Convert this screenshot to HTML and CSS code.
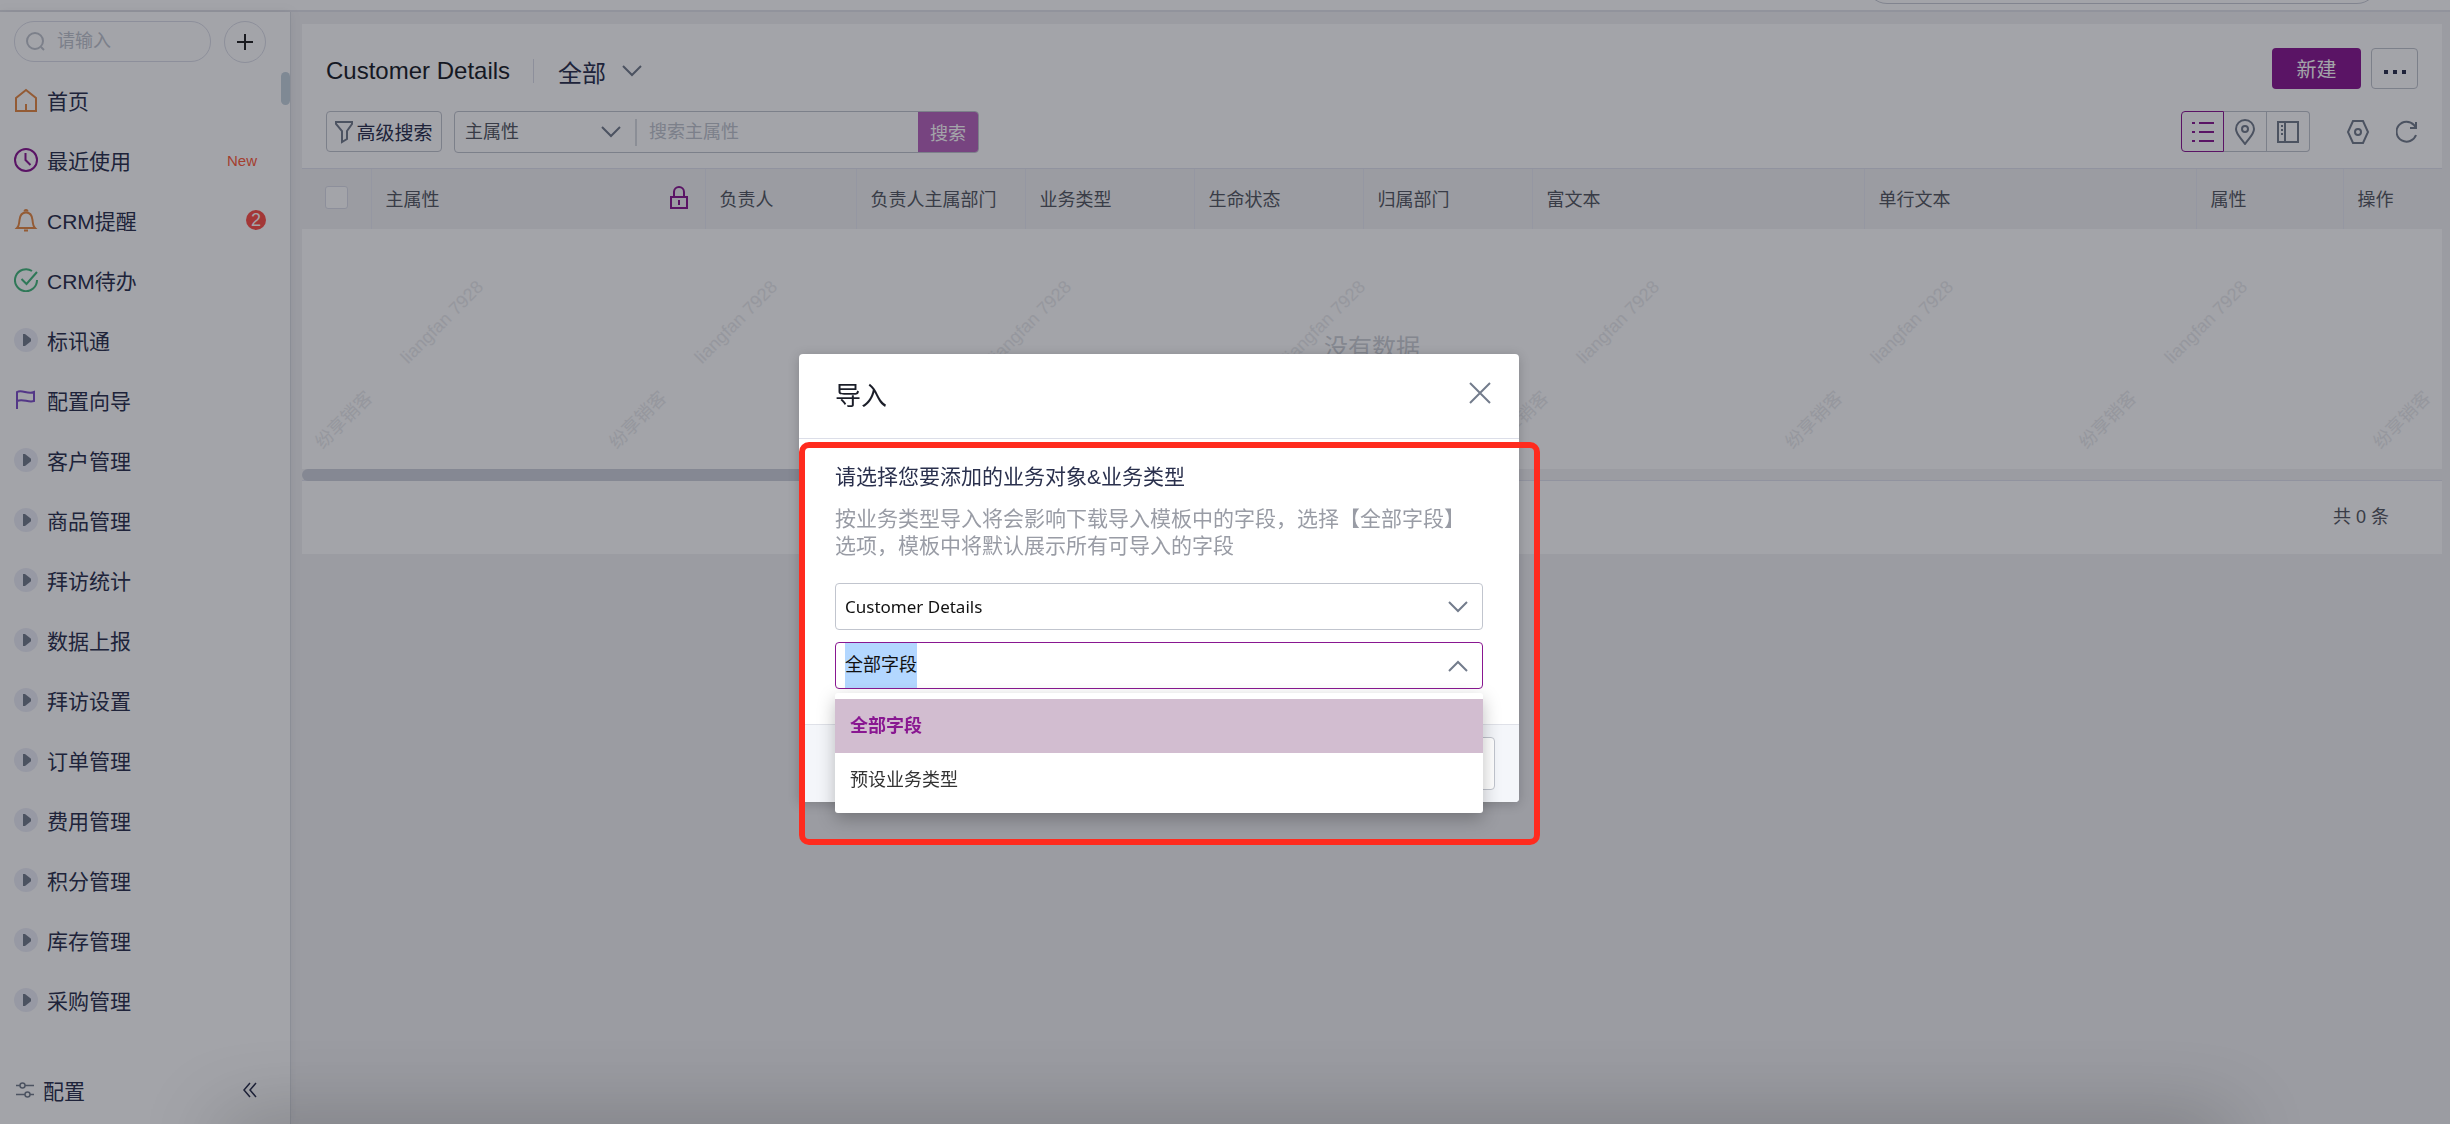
FILE: index.html
```html
<!DOCTYPE html>
<html lang="zh-CN">
<head>
<meta charset="UTF-8">
<meta name="viewport" content="width=device-width, initial-scale=1.0">
<title>Customer Details</title>
<link rel="stylesheet" href="styles.css">
</head>
<body>
<header class="topbar">
    <div class="topbar-search"></div>
</header>
<div class="layout">
    <aside class="sidebar">
        <div class="side-tools">
            <label class="side-search">
                <svg width="20" height="20" viewBox="0 0 20 20"><circle cx="9" cy="9" r="8"/><path d="M15 15l3 3"/></svg>
                <input type="text" placeholder="请输入" aria-label="搜索菜单">
            </label>
            <button type="button" class="add-btn" aria-label="添加">
                <svg width="18" height="18" viewBox="0 0 18 18"><path d="M9 1v16M1 9h16"/></svg>
            </button>
        </div>
        <nav class="menu">
            <a href="#"><svg class="orange" width="24" height="24" viewBox="0 0 24 24"><path d="M2 23V10l10-8 10 8v13zM12 23v-7"/></svg>首页</a>
            <a href="#"><svg class="purple" width="24" height="24" viewBox="0 0 24 24"><circle cx="12" cy="12" r="11"/><path d="M11.500 5v7l5 5"/></svg>最近使用<span class="new">New</span></a>
            <a href="#"><svg class="orange" width="24" height="24" viewBox="0 0 24 24"><path d="M10.500 3.500a1.500 1.500 0 0 1 3 0M3 20c2-2 2-3 2.500-8 .5-5 3-7.500 6.500-7.500s6 2.500 6.500 7.500c.5 5 .5 6 2.500 8zM10 22.500h4"/></svg>CRM提醒<span class="count">2</span></a>
            <a href="#"><svg class="green" width="24" height="24" viewBox="0 0 24 24"><path d="M18 3a11 11 0 1 0 5 9M7.500 11l5 5L23 4"/></svg>CRM待办</a>
            <a href="#"><i class="arrow"></i>标讯通</a>
            <a href="#"><svg class="violet" width="24" height="24" viewBox="0 0 24 24"><path d="M3 21V4c5-3 11 3 17 0v9c-6 2-11-3-17 0"/></svg>配置向导</a>
            <a href="#"><i class="arrow"></i>客户管理</a>
            <a href="#"><i class="arrow"></i>商品管理</a>
            <a href="#"><i class="arrow"></i>拜访统计</a>
            <a href="#"><i class="arrow"></i>数据上报</a>
            <a href="#"><i class="arrow"></i>拜访设置</a>
            <a href="#"><i class="arrow"></i>订单管理</a>
            <a href="#"><i class="arrow"></i>费用管理</a>
            <a href="#"><i class="arrow"></i>积分管理</a>
            <a href="#"><i class="arrow"></i>库存管理</a>
            <a href="#"><i class="arrow"></i>采购管理</a>
        </nav>
        <div class="side-thumb"></div>
        <div class="side-foot">
            <a href="#"><svg width="18" height="18" viewBox="0 0 18 18"><path d="M0 4.500h4M9 4.500h9M0 13.500h9M14 13.500h4"/><circle cx="6.500" cy="4.500" r="2.500"/><circle cx="11.500" cy="13.500" r="2.500"/></svg>配置</a>
            <button type="button" aria-label="收起">
                <svg width="14" height="16" viewBox="0 0 14 16"><path d="M7 1L1 8l6 7M13 1L7 8l6 7"/></svg>
            </button>
        </div>
    </aside>

    <main class="content">
        <section class="head">
            <div class="head-row">
                <h1>Customer Details</h1>
                <button type="button" class="scene">全部 <svg width="20" height="12" viewBox="0 0 20 12"><path d="M1 1l9 9 9-9"/></svg></button>
                <div class="actions">
                    <button type="button" class="btn-new">新建</button>
                    <button type="button" class="btn-more" aria-label="更多"><i></i><i></i><i></i></button>
                </div>
            </div>
            <div class="head-row">
                <button type="button" class="btn-filter">
                    <svg width="18" height="24" viewBox="0 0 18 24"><path d="M1 2h16v2l-5 7v8l-5 3V11L1 4z"/></svg>高级搜索
                </button>
                <div class="search">
                    <select aria-label="搜索字段"><option>主属性</option></select>
                    <svg class="search-arrow" width="20" height="12" viewBox="0 0 20 12"><path d="M1 1l9 9 9-9"/></svg>
                    <input type="text" placeholder="搜索主属性" aria-label="搜索主属性">
                    <button type="button">搜索</button>
                </div>
                <div class="tools">
                    <div class="views">
                        <button type="button" class="active" aria-label="列表"><svg width="24" height="22" viewBox="0 0 24 22"><path d="M8 2h15M8 11h15M8 20h15M1 2h3M1 11h3M1 20h3"/></svg></button>
                        <button type="button" aria-label="地图"><svg width="20" height="26" viewBox="0 0 20 26"><path d="M10 25C5 18 1 15 1 10a9 9 0 0 1 18 0c0 5-4 8-9 15z"/><circle cx="10" cy="10" r="3"/></svg></button>
                        <button type="button" aria-label="分栏"><svg width="24" height="22" viewBox="0 0 24 22"><path d="M2 1h20v20H2zM9 1v20M5 5h2M5 9h2M5 13h2"/></svg></button>
                    </div>
                    <button type="button" class="tool" aria-label="设置"><svg width="24" height="24" viewBox="0 0 24 24"><path d="M7 1h10l5 11-5 11H7L2 12z"/><circle cx="12" cy="12" r="3"/></svg></button>
                    <button type="button" class="tool" aria-label="刷新"><svg width="22" height="24" viewBox="0 0 22 24"><path d="M20 15a10 10 0 1 1-2-10l2 3M20 2v6h-6"/></svg></button>
                </div>
            </div>
        </section>

        <table class="grid">
            <colgroup>
                <col class="w-check"><col class="w-main"><col class="w-owner"><col class="w-md"><col class="w-md"><col class="w-md"><col class="w-md"><col class="w-lg"><col class="w-lg"><col class="w-attr"><col>
            </colgroup>
            <thead>
                <tr>
                    <th><input type="checkbox" aria-label="全选"></th>
                    <th><div class="locked">主属性<svg width="20" height="24" viewBox="0 0 20 24"><path d="M2 11h16v11H2zM5 11V6a5 5 0 0 1 10 0v5M10 14v5"/></svg></div></th>
                    <th>负责人</th>
                    <th>负责人主属部门</th>
                    <th>业务类型</th>
                    <th>生命状态</th>
                    <th>归属部门</th>
                    <th>富文本</th>
                    <th>单行文本</th>
                    <th>属性</th>
                    <th>操作</th>
                </tr>
            </thead>
        </table>
        <div class="empty">
            <div class="marks">
                <div class="mark"><span>liangfan 7928</span><em>纷享销客</em></div>
                <div class="mark"><span>liangfan 7928</span><em>纷享销客</em></div>
                <div class="mark"><span>liangfan 7928</span><em>纷享销客</em></div>
                <div class="mark"><span>liangfan 7928</span><em>纷享销客</em></div>
                <div class="mark"><span>liangfan 7928</span><em>纷享销客</em></div>
                <div class="mark"><span>liangfan 7928</span><em>纷享销客</em></div>
                <div class="mark"><span>liangfan 7928</span><em>纷享销客</em></div>
                <div class="mark"><em>纷享销客</em></div>
            </div>
            <p>没有数据</p>
        </div>
        <div class="scroll-x"><div></div></div>
        <footer class="pager">共 0 条</footer>
    </main>
</div>

<div class="mask"></div>
<div class="dock-shadow"></div>

<div class="dialog" role="dialog" aria-labelledby="dialogTitle">
    <div class="dialog-head">
        <h2 id="dialogTitle">导入</h2>
        <button type="button" aria-label="关闭"><svg width="22" height="22" viewBox="0 0 22 22"><path d="M1 1l20 20M21 1L1 21"/></svg></button>
    </div>
    <div class="dialog-body">
        <label for="object">请选择您要添加的业务对象&amp;业务类型</label>
        <p>按业务类型导入将会影响下载导入模板中的字段，选择【全部字段】选项，模板中将默认展示所有可导入的字段</p>
        <div class="field">
            <select id="object"><option>Customer Details</option></select>
            <svg width="20" height="12" viewBox="0 0 20 12"><path d="M1 1l9 9 9-9"/></svg>
        </div>
        <div class="field open">
            <input type="text" id="recordType" value="全部字段" aria-label="业务类型">
            <svg width="20" height="12" viewBox="0 0 20 12"><path d="M1 11l9-9 9 9"/></svg>
            <ul class="options" role="listbox">
                <li class="selected" role="option" aria-selected="true">全部字段</li>
                <li role="option">预设业务类型</li>
            </ul>
        </div>
    </div>
    <div class="dialog-foot">
        <button type="button" aria-label="取消"></button>
    </div>
    <div class="highlight"></div>
</div>

<script>
    const recordType = document.getElementById('recordType');
    recordType.focus();
    recordType.select();
</script>
</body>
</html>
```

FILE: styles.css
```css
* {
    box-sizing: border-box;
}

body {
    margin: 0;
    height: 100vh;
    overflow: hidden;
    display: flex;
    flex-direction: column;
    background-color: #f2f2f4;
    color: #2a304d;
    font-family: "Liberation Sans", "Noto Sans CJK SC", sans-serif;
    font-size: 18px;
}

h1,
h2,
p,
ul {
    margin: 0;
    padding: 0;
    font-weight: normal;
}

button,
input,
select {
    margin: 0;
    padding: 0;
    border: none;
    outline: none;
    background: none;
    color: inherit;
    font: inherit;
}

select {
    appearance: none;
}

svg {
    flex-shrink: 0;
    fill: none;
    stroke: #737c8c;
    stroke-width: 2;
}

a {
    color: inherit;
    text-decoration: none;
}

/* top bar, only the lower edge of the search pill is in view */
.topbar {
    height: 12px;
    flex-shrink: 0;
    display: flex;
    align-items: flex-end;
    justify-content: flex-end;
    overflow: hidden;
    padding: 0 72px 6px 0;
    background-color: #fff;
    border-bottom: 2px solid #e3e4ea;
}

.topbar-search {
    width: 512px;
    height: 42px;
    border: 1px solid #c9ccd6;
    border-radius: 21px;
}

.layout {
    flex: 1;
    min-height: 0;
    display: flex;
}

/* sidebar */
.sidebar {
    position: relative;
    width: 291px;
    flex-shrink: 0;
    display: flex;
    flex-direction: column;
    background-color: #fff;
    border-right: 1px solid #d9dbe1;
    box-shadow: 0 0 12px rgba(0, 0, 0, 0.06);
}

.side-tools {
    display: flex;
    gap: 13px;
    padding: 9px 14px 7px;
}

.side-search {
    width: 197px;
    height: 41px;
    display: flex;
    align-items: center;
    gap: 11px;
    padding: 0 11px;
    border: 1px solid #dcdee8;
    border-radius: 20px;
}

.side-search svg {
    stroke: #c1c5ce;
}

.side-search input {
    width: 100%;
}

input::placeholder {
    color: #c1c5ce;
    opacity: 1;
}

.add-btn {
    width: 42px;
    height: 42px;
    display: flex;
    align-items: center;
    justify-content: center;
    border: 1px solid #dcdee8;
    border-radius: 50%;
}

.add-btn svg {
    stroke: #222;
}

.menu {
    flex: 1;
    min-height: 0;
    overflow: hidden;
}

.menu a {
    height: 60px;
    display: flex;
    align-items: center;
    gap: 9px;
    padding: 0 24px 0 14px;
    font-size: 21px;
}

.menu .orange {
    stroke: #e68a45;
}

.menu .purple {
    stroke: #891791;
}

.menu .green {
    stroke: #45b87c;
}

.menu .violet {
    stroke: #7f4fc9;
}

.arrow {
    width: 24px;
    height: 24px;
    padding: 6px 9px;
    border-radius: 50%;
    background-color: #eceef7;
}

.arrow::before {
    content: "";
    display: block;
    width: 8px;
    height: 12px;
    background-color: #737c8c;
    clip-path: polygon(0 0, 25% 0, 100% 40%, 100% 60%, 25% 100%, 0 100%);
}

.new {
    margin-left: auto;
    padding-right: 9px;
    color: #ff5c3a;
    font-size: 15px;
}

.count {
    width: 20px;
    height: 20px;
    margin-left: auto;
    border-radius: 50%;
    background-color: #ff4f48;
    color: #fff;
    font-size: 18px;
    line-height: 20px;
    text-align: center;
}

.side-thumb {
    position: absolute;
    top: 60px;
    right: 0;
    width: 9px;
    height: 33px;
    border-radius: 5px;
    background-color: #c5d3de;
}

.side-foot {
    height: 68px;
    display: flex;
    align-items: center;
    justify-content: space-between;
    padding: 0 33px 0 16px;
}

.side-foot a,
.side-foot button {
    display: flex;
    align-items: center;
    gap: 9px;
    font-size: 21px;
}

.side-foot svg {
    stroke-width: 1.500;
}

.side-foot button svg {
    stroke: #2a304d;
}

/* list page */
.content {
    flex: 1;
    min-width: 0;
    padding: 12px 8px 0 11px;
}

.head {
    height: 144px;
    padding: 24px 24px 0;
    background-color: #fff;
}

.head-row {
    height: 63px;
    display: flex;
    align-items: flex-start;
}

.head h1 {
    padding-right: 23px;
    color: #1a1d28;
    font-size: 24px;
    line-height: 46px;
}

.scene {
    display: flex;
    align-items: center;
    gap: 16px;
    height: 24px;
    margin-top: 11px;
    padding-left: 24px;
    border-left: 1px solid #dcdee8;
    font-size: 24px;
}

.actions,
.tools {
    display: flex;
    align-items: center;
    margin-left: auto;
}

.actions {
    gap: 10px;
}

.btn-new {
    width: 89px;
    height: 41px;
    border-radius: 4px;
    background-color: #891791;
    color: #fff;
    font-size: 20px;
}

.btn-more {
    width: 47px;
    height: 41px;
    display: flex;
    align-items: center;
    justify-content: center;
    gap: 5px;
    padding-top: 6px;
    border: 1px solid #c1c5ce;
    border-radius: 4px;
}

.btn-more i {
    width: 4px;
    height: 4px;
    background-color: #2a304d;
}

.btn-filter {
    width: 116px;
    height: 41px;
    display: flex;
    align-items: center;
    justify-content: center;
    gap: 3px;
    margin-right: 12px;
    border: 1px solid #c1c5ce;
    border-radius: 4px;
    font-size: 19px;
}

.search {
    width: 525px;
    height: 42px;
    display: flex;
    align-items: center;
    overflow: hidden;
    padding-left: 10px;
    border: 1px solid #c1c5ce;
    border-radius: 4px;
}

.search select {
    width: 136px;
    color: #545861;
}

.search input {
    flex: 1;
    min-width: 0;
    height: 27px;
    margin-left: 14px;
    padding-left: 12px;
    border-left: 2px solid #d9dbe1;
}

.search button {
    width: 60px;
    height: 42px;
    background-color: #b965bd;
    color: #fff;
}

.views {
    display: flex;
    margin-right: 36px;
}

.views button {
    width: 43px;
    height: 41px;
    display: flex;
    align-items: center;
    justify-content: center;
    border: 1px solid #c1c5ce;
    border-left: none;
}

.views button:last-child {
    border-radius: 0 4px 4px 0;
}

.views .active {
    border: 1px solid #891791;
    border-radius: 4px 0 0 4px;
}

.views .active svg {
    stroke: #891791;
}

.tool {
    display: flex;
}

.tool + .tool {
    margin-left: 26px;
}

.grid {
    width: 100%;
    table-layout: fixed;
    border-collapse: collapse;
    background-color: #f2f2f4;
}

.grid th {
    height: 60px;
    padding: 0 14px 2px;
    border-top: 1px solid #e2e4ef;
    border-left: 1px solid #e9ebf4;
    color: #545861;
    font-weight: normal;
    text-align: left;
    white-space: nowrap;
}

.grid th:first-child {
    padding-left: 23px;
    border-left: none;
}

.w-check {
    width: 69px;
}

.w-main {
    width: 334px;
}

.w-owner {
    width: 151px;
}

.w-md {
    width: 169px;
}

.w-lg {
    width: 332px;
}

.w-attr {
    width: 147px;
}

.grid input {
    display: block;
    width: 23px;
    height: 23px;
    appearance: none;
    border: 1px solid #dcdee8;
    border-radius: 3px;
    background-color: #fff;
}

.locked {
    display: flex;
    align-items: center;
    justify-content: space-between;
    padding-right: 2px;
}

.locked svg {
    stroke: #891791;
}

.empty {
    position: relative;
    height: 240px;
    padding-top: 101px;
    background-color: #fff;
    color: #cdd0d5;
    font-size: 24px;
    line-height: 36px;
    text-align: center;
}

/* watermark */
.marks {
    position: absolute;
    inset: 0;
    display: flex;
    overflow: hidden;
    color: #eaebed;
    font-size: 18px;
    line-height: 24px;
}

.mark {
    position: relative;
    width: 294px;
    flex-shrink: 0;
}

.mark span,
.mark em {
    position: absolute;
    width: 120px;
    font-style: normal;
    transform: rotate(-45deg);
}

.mark span {
    top: 81px;
    left: 80px;
}

.mark em {
    top: 179px;
    left: -18px;
}

.scroll-x {
    height: 12px;
    border-bottom: 1px solid #e2e4ef;
}

.scroll-x div {
    width: 50%;
    height: 12px;
    border-radius: 6px;
    background-color: #cfd2dc;
}

.pager {
    height: 73px;
    padding-right: 53px;
    background-color: #fff;
    color: #545861;
    line-height: 72px;
    text-align: right;
}

.mask {
    position: fixed;
    inset: 0;
    background-color: rgba(12, 16, 28, 0.38);
}

.dock-shadow {
    position: fixed;
    bottom: -40px;
    left: 220px;
    right: 220px;
    height: 40px;
    box-shadow: 0 0 80px rgba(0, 0, 0, 0.3);
}

/* import dialog */
.dialog {
    position: fixed;
    top: 354px;
    left: calc(50% - 426px);
    width: 720px;
    border-radius: 4px;
    background-color: #fff;
    box-shadow: 0 2px 12px rgba(0, 0, 0, 0.2);
}

.dialog-head {
    height: 85px;
    display: flex;
    align-items: center;
    justify-content: space-between;
    padding: 0 28px 6px 36px;
    border-bottom: 1px solid #dcdee8;
}

.dialog-head h2 {
    color: #1a1d28;
    font-size: 26px;
}

.dialog-head button {
    display: flex;
}

.dialog-body {
    height: 285px;
    padding: 22px 36px 0;
}

.dialog-body label {
    display: block;
    margin-bottom: 12px;
    font-size: 21px;
    line-height: 32px;
}

.dialog-body p {
    margin-bottom: 24px;
    color: #999ca5;
    font-size: 21px;
    line-height: 27px;
}

.field {
    position: relative;
    height: 47px;
    display: flex;
    align-items: center;
    margin-bottom: 12px;
    padding: 0 14px 0 9px;
    border: 1px solid #c1c5ce;
    border-radius: 4px;
    color: #111;
}

.field select,
.field input {
    flex: 1;
    height: 45px;
    line-height: 45px;
}

.field select {
    font-family: "Noto Sans", "Noto Sans CJK SC", sans-serif;
    font-size: 17px;
}

.field input::selection {
    background-color: #b3d7ff;
    color: #111;
}

.field.open {
    border-color: #891791;
}

.options {
    position: absolute;
    z-index: 1;
    top: 50px;
    left: -1px;
    right: -1px;
    padding: 6px 0;
    border-radius: 3px;
    background-color: #fff;
    box-shadow: 0 6px 18px rgba(0, 0, 0, 0.25);
    list-style: none;
}

.options li {
    padding: 0 15px;
    color: #333;
    line-height: 54px;
}

.options .selected {
    background-color: #d2bdd0;
    color: #891791;
    font-weight: bold;
}

.dialog-foot {
    height: 78px;
    display: flex;
    justify-content: flex-end;
    padding: 12px 24px;
    border-top: 1px solid #dfe1e8;
    border-radius: 0 0 4px 4px;
    background-color: #f4f6fa;
}

.dialog-foot button {
    width: 96px;
    height: 53px;
    border: 1px solid #c1c5ce;
    border-radius: 4px;
    background-color: #fff;
}

.highlight {
    position: absolute;
    z-index: 2;
    top: 88px;
    left: 0;
    width: 741px;
    height: 403px;
    border: 6px solid #ff2b1e;
    border-radius: 10px;
    pointer-events: none;
}
```
